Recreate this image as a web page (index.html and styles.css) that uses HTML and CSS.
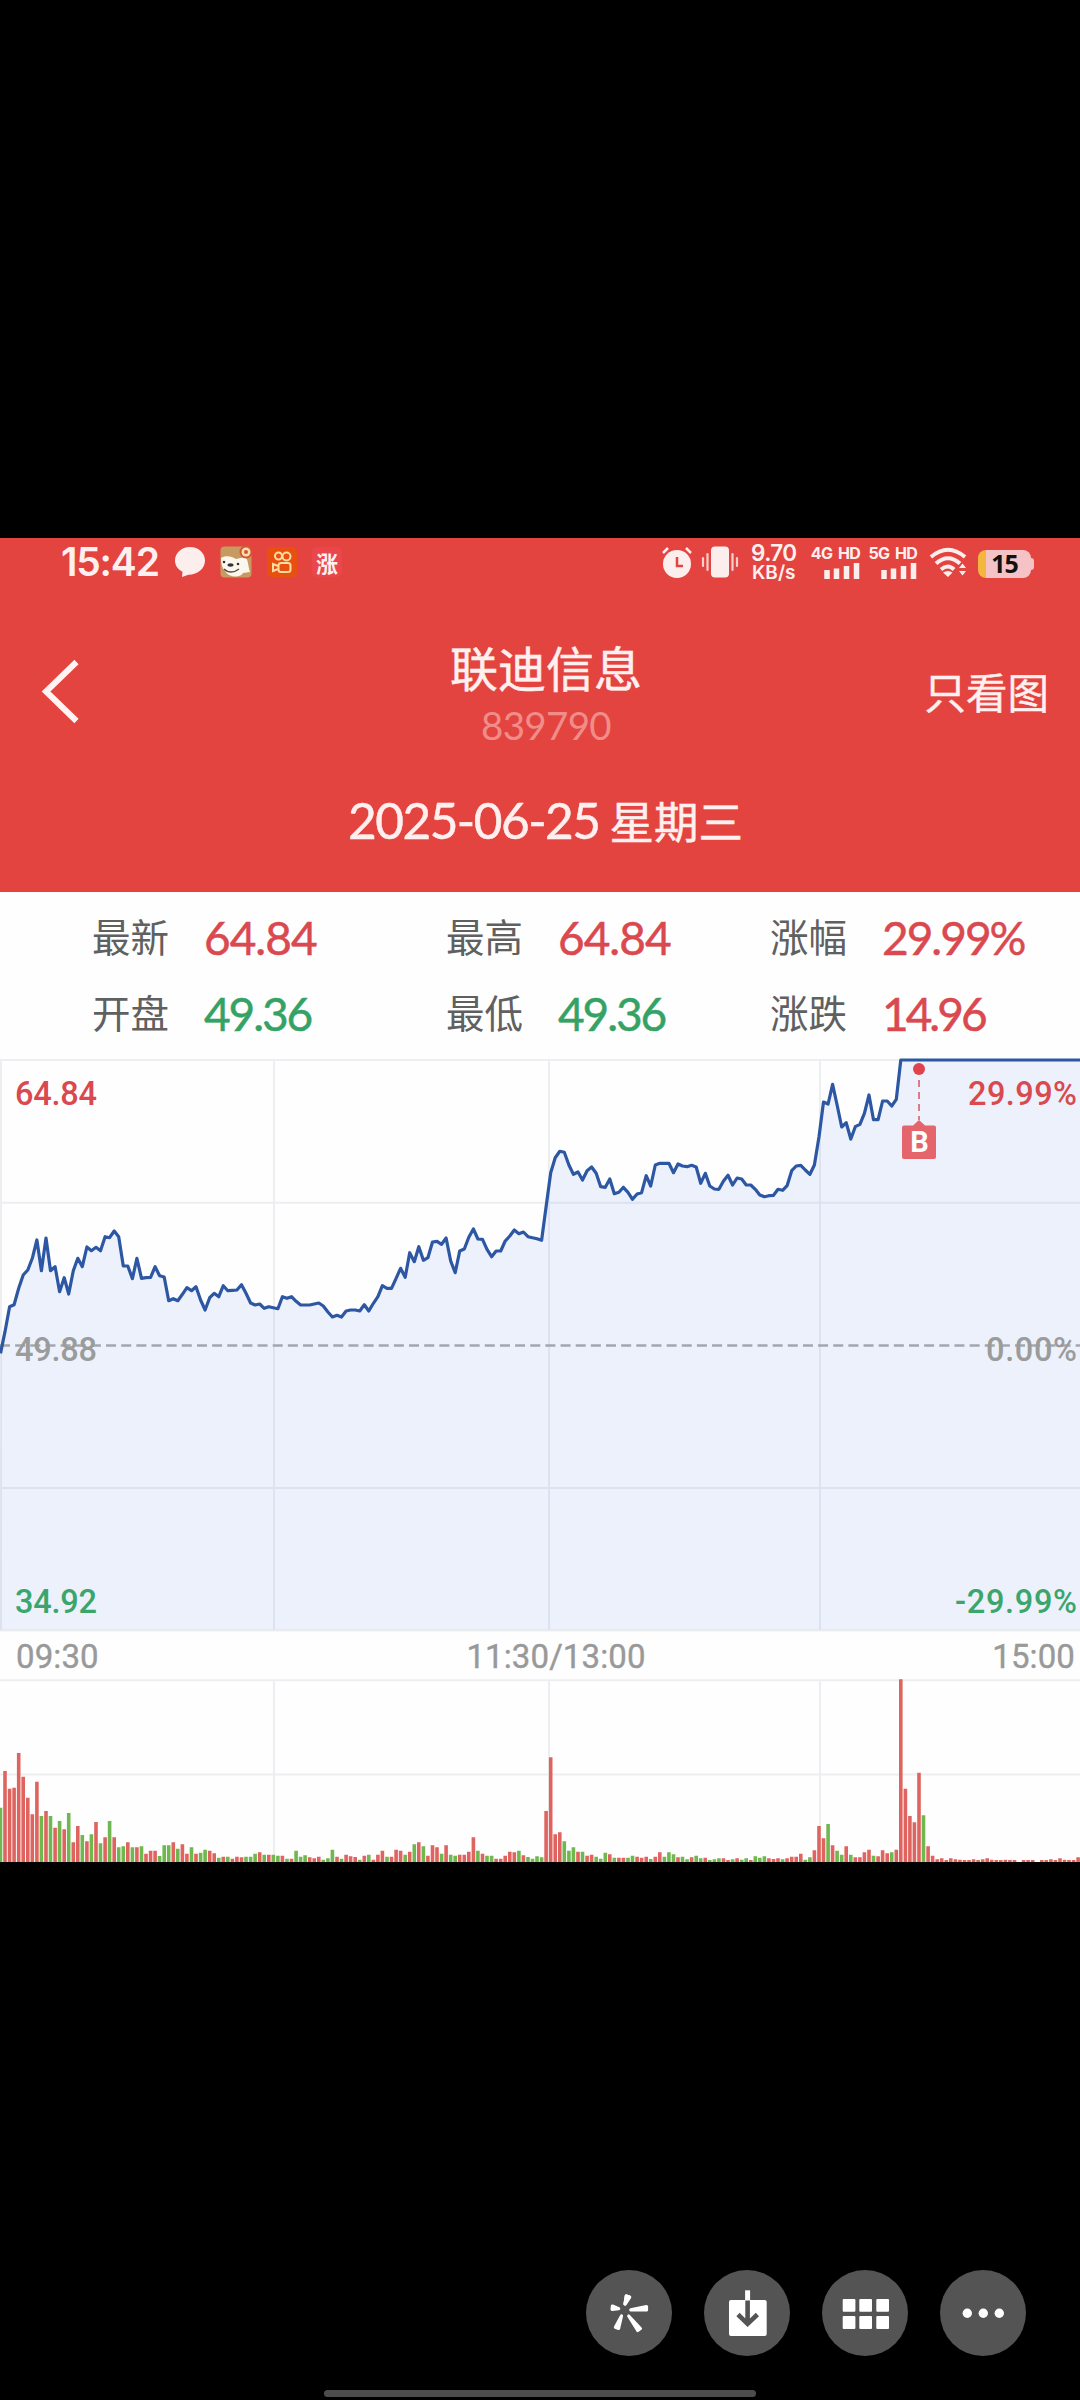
FILE: index.html
```html
<!DOCTYPE html>
<html lang="zh-CN">
<head>
<meta charset="utf-8">
<title>联迪信息 839790</title>
<link rel="stylesheet" href="styles.css">
</head>
<body>
<main class="viewer">
  <section class="shot">
    <header class="head">
      <div class="status">
        <div class="status-left">
          <span class="clock">15:42</span>
          <svg class="ic-chat" width="32" height="32" viewBox="0 0 32 32"><path fill="#fdeeee" d="M16 1C7.500 1 1 7 1 14.500c0 5 3 9 7.500 11.300L8 31l6.500-2.200C24 28.500 31 22.500 31 14.500 31 7 24.500 1 16 1z"/></svg>
          <svg class="ic-dog" width="32" height="32" viewBox="0 0 32 32"><rect x=".5" y=".5" width="31" height="31" rx="4" fill="#c79a62"/><path fill="#fbf7ee" d="M1 12c4-3 11-2 15 1l9-2c3 1 3 9 5 15l-7 1c-2 5-14 5-18-2-3-3-4-8-4-13z"/><path d="M4 23c4 4 10 4 15 0" fill="none" stroke="#584b3c" stroke-width="1.300"/><ellipse cx="10.500" cy="19" rx="3" ry="1.700" fill="#333"/><circle cx="4" cy="16" r="1.300" fill="#333"/><circle cx="18" cy="18" r="1.300" fill="#333"/><circle cx="26" cy="6" r="6.500" fill="#d4562e"/><circle cx="26" cy="6" r="4.500" fill="#f5dfb2"/><circle cx="26" cy="6" r="2" fill="#d4562e"/></svg>
          <svg class="ic-cam" width="30" height="32" viewBox="0 0 30 32"><rect y="1" width="30" height="30" rx="5" fill="#e9500f"/><g fill="none" stroke="#ffdca0" stroke-width="2"><circle cx="11.500" cy="10" r="3.500"/><circle cx="19.500" cy="10.500" r="4"/><rect x="11.500" y="17" width="12" height="9" rx="2.500"/><path d="M11 20l-5-2v7l5-2"/></g></svg>
          <span class="badge-app">涨</span>
        </div>
        <div class="status-right">
          <svg width="32" height="32" viewBox="0 0 32 32"><circle cx="16" cy="18" r="14" fill="#fdeeee"/><path d="M2 7l5-5M30 7l-5-5" stroke="#fdeeee" stroke-width="2.500" fill="none"/><path d="M16 11v9h6" fill="none" stroke="#e34440" stroke-width="2.500"/></svg>
          <svg class="ic-vib" width="38" height="32" viewBox="0 0 38 32"><rect x="10" y=".5" width="18" height="31" rx="4" fill="#fdeeee"/><path d="M2 12v8M6.500 8v16M36 12v8M31.500 8v16" stroke="#f9cfcd" stroke-width="2.200" stroke-linecap="round"/></svg>
          <div class="speed"><span>9.70</span><span class="unit">KB/s</span></div>
          <div class="net"><span>4G HD</span><svg width="36" height="17" viewBox="0 0 36 17"><path d="M3 8v9M12.500 6.500V17M22.500 4v13M32.500 1v16" stroke="#fdeeee" stroke-width="5.500"/></svg></div>
          <div class="net second"><span>5G HD</span><svg width="36" height="17" viewBox="0 0 36 17"><path d="M3 8v9M12.500 6.500V17M22.500 4v13M32.500 1v16" stroke="#fdeeee" stroke-width="5.500"/></svg></div>
          <svg class="ic-wifi" width="38" height="30" viewBox="0 0 38 30"><g fill="none" stroke="#fdeeee" stroke-width="4"><path d="M2 10Q19-4.500 36 10"/><path d="M7 16.500Q19 6 31 16.500"/><path d="M12 22.500q7-6 13 0"/></g><path d="M14 25.500l5 4.500 4.500-4.500q-4.500-3-9.500 0zM30 21l3.500-4.500L37 21zM30 24l3.500 4.500L37 24z" fill="#fdeeee"/></svg>
          <div class="battery"><span>15</span></div>
        </div>
      </div>
      <div class="titlebar">
        <svg class="back" width="40" height="66" viewBox="0 0 40 66"><path d="M36.500 4L6 33.500 36.500 63" fill="none" stroke="#fff4f3" stroke-width="6"/></svg>
        <div class="title"><h1>联迪信息</h1><p>839790</p></div>
        <span class="only">只看图</span>
      </div>
      <div class="date"><span class="day">2025-06-25</span><span class="week">星期三</span></div>
    </header>
    <dl class="stats">
      <div><dt>最新</dt><dd class="up">64.84</dd></div>
      <div><dt>最高</dt><dd class="up">64.84</dd></div>
      <div><dt>涨幅</dt><dd class="up pct">29.99%</dd></div>
      <div><dt>开盘</dt><dd class="down">49.36</dd></div>
      <div><dt>最低</dt><dd class="down">49.36</dd></div>
      <div><dt>涨跌</dt><dd class="up diff">14.96</dd></div>
    </dl>
    <svg class="price" width="1080" height="575" viewBox="0 1057 1080 575">
      <path class="area" id="area"/>
      <path class="grid" d="M0 1060H1080M0 1202.700H1080M0 1488H1080M0 1630.500H1080M1 1060V1630M274 1060V1630M549 1060V1630M820 1060V1630"/>
      <path class="base" d="M0 1345.500H1080"/>
      <path class="line" id="line"/>
      <g class="labels">
        <text class="up" x="15" y="1104.500" textLength="82">64.84</text>
        <text class="up" x="968" y="1104.500" textLength="109">29.99%</text>
        <text x="15" y="1361" textLength="82">49.88</text>
        <text x="986" y="1361" textLength="91">0.00%</text>
        <text class="down" x="15" y="1612.500" textLength="82">34.92</text>
        <text class="down" x="955" y="1612.500" textLength="122">-29.99%</text>
      </g>
      <circle cx="919" cy="1069" r="6" fill="#e1434c"/>
      <path d="M919 1080V1120" stroke="#d5717d" stroke-width="1.800" stroke-dasharray="7 5"/>
      <path d="M904 1125.500h9l6-5.500 6 5.500h9q2 0 2 2v29.500q0 2-2 2h-30q-2 0-2-2V1127.500q0-2 2-2z" fill="#e4656c"/>
      <text class="buy" x="919.500" y="1151.500">B</text>
    </svg>
    <div class="times"><span>09:30</span><span>11:30/13:00</span><span>15:00</span></div>
    <svg class="volume" width="1080" height="184" viewBox="0 1678 1080 184">
      <path class="grid" d="M0 1680.300H1080M0 1774.500H1080M274 1680V1862M549 1680V1862M820 1680V1862"/>
      <path class="vol-up" id="volUp"/>
      <path class="vol-down" id="volDown"/>
    </svg>
  </section>
  <nav class="tools">
    <button aria-label="识图"><svg viewBox="0 0 86 86"><g fill="#fff" stroke="#fff" stroke-width="3.200" stroke-linejoin="round"><path d="M39 34l4.600-6.900-3.300-1.200zM44.800 39.800l15.700.2v-3.500zM42.700 46l11.700 12.500-2.700 2zM35.500 46l-2.900 12.400-3.200-1.200zM32.700 38.700l-6.600.6.300-3.200z"/><path d="M39 34l1.300-8 3.300 1.200z"/></g></svg></button>
    <button aria-label="下载"><svg viewBox="0 0 86 86"><rect x="25" y="30" width="37.700" height="36" rx="2" fill="#fff"/><path d="M43.600 20.300V30" stroke="#fff" stroke-width="5"/><path d="M43.600 30.500V53M34 44.500l9.600 9.300 9.800-9.300" fill="none" stroke="#545454" stroke-width="4.600"/></svg></button>
    <button aria-label="全部图片"><svg viewBox="0 0 86 86"><g fill="#fff"><rect x="20.700" y="29" width="12.700" height="12.700" rx="1"/><rect x="37.300" y="29" width="12.700" height="12.700" rx="1"/><rect x="54.300" y="29" width="12.700" height="12.700" rx="1"/><rect x="20.700" y="46" width="12.700" height="12.900" rx="1"/><rect x="37.300" y="46" width="12.700" height="12.900" rx="1"/><rect x="54.300" y="46" width="12.700" height="12.900" rx="1"/></g></svg></button>
    <button aria-label="更多"><svg viewBox="0 0 86 86"><g fill="#fff"><circle cx="27.300" cy="43.300" r="4.700"/><circle cx="43.300" cy="43.300" r="4.700"/><circle cx="59.300" cy="43.300" r="4.700"/></g></svg></button>
  </nav>
  <div class="home"></div>
</main>
<script src="chart.js"></script>
</body>
</html>
```
FILE: styles.css
```css
* { box-sizing: border-box; margin: 0; padding: 0; }
body { background: #000; font-family: Lato, "Noto Sans CJK SC", sans-serif; }
svg { display: block; flex: none; }
.viewer { width: 1080px; height: 2400px; padding-top: 538px; display: flex; flex-direction: column; overflow: hidden; }
.shot { height: 1324px; flex: none; background: #fefefe; }

.head { height: 353.500px; background: #e34440; color: #fff0ef; }
.status { height: 48px; display: flex; justify-content: space-between; padding: 0 47px 0 61px; }
.status-left, .status-right { display: flex; align-items: center; height: 48px; }
.clock { width: 100px; font: 600 39px/48px Inter, sans-serif; letter-spacing: -1.200px; white-space: nowrap; }
.ic-chat { margin-left: 13px; }
.ic-dog { margin-left: 14px; }
.ic-cam { margin-left: 15px; }
.badge-app { margin-left: 15px; width: 30px; height: 30px; border-radius: 5px; background: #e9474d; font: 700 22px/30px "Noto Sans CJK SC", sans-serif; text-align: center; }
.ic-vib { margin-left: 8px; }
.speed { margin-left: 12px; width: 47px; display: flex; flex-direction: column; font: 600 22.500px/21px Inter, sans-serif; letter-spacing: -.6px; white-space: nowrap; padding-top: 1px; }
.speed .unit { font-size: 19px; line-height: 20px; letter-spacing: 0; padding-left: 1px; }
.net { margin-left: 13px; width: 49px; display: flex; flex-direction: column; align-items: flex-end; font: 700 16px/16px Inter, sans-serif; letter-spacing: -.8px; word-spacing: 3px; white-space: nowrap; }
.net.second { margin-left: 8px; }
.net svg { margin-top: 1px; }
.ic-wifi { margin-left: 12px; }
.battery { position: relative; margin: 3px 2px 0 11px; width: 53px; height: 28px; border-radius: 8px; background: linear-gradient(90deg, #f4b63c 8px, #f5c3c6 8px); color: #111; font: 700 25px/27px "Noto Sans", sans-serif; letter-spacing: -1px; text-align: center; }
.battery::after { content: ""; position: absolute; right: -3px; top: 8px; width: 3px; height: 12px; border-radius: 0 3px 3px 0; background: #f5c3c6; }

.titlebar { height: 166px; display: grid; grid-template-columns: 270px 1fr 270px; align-items: start; padding-top: 45px; }
.back { margin: 27px 0 0 40px; }
.title { text-align: center; padding-left: 12px; }
.title h1 { font: 400 48px/70px "Noto Sans CJK SC", sans-serif; -webkit-text-stroke: .5px; }
.title p { padding-top: 4px; font-size: 38.500px; line-height: 40px; letter-spacing: -.7px; color: #f08d89; }
.only { justify-self: end; margin: 30px 31px 0 0; font: 400 41.500px/60px "Noto Sans CJK SC", sans-serif; -webkit-text-stroke: .4px; }
.date { display: flex; justify-content: center; align-items: baseline; gap: 10px; padding-top: 34px; padding-left: 11px; line-height: 68px; -webkit-text-stroke: .5px; }
.day { font-size: 49.500px; letter-spacing: -1.500px; }
.week { font-size: 44.500px; font-family: "Noto Sans CJK SC", sans-serif; }

.stats { height: 165.500px; display: grid; grid-template-columns: 354px 324px 1fr; grid-template-rows: 76px 76px; padding: 6px 0 0 92px; }
.stats div { display: flex; align-items: center; }
.stats dt { width: 112px; color: #606060; font: 400 38.500px/76px "Noto Sans CJK SC", sans-serif; padding-bottom: 2px; }
.stats dd { font-size: 46px; line-height: 76px; letter-spacing: -1px; padding-top: 4px; -webkit-text-stroke: .5px; }
.stats .pct { letter-spacing: -2px; }
.stats .down { letter-spacing: -2.100px; }
.stats .diff { letter-spacing: -3px; }
dd.up { color: #d9494f; }
dd.down { color: #35a265; }

.grid { fill: none; stroke: #14204a; stroke-opacity: .07; stroke-width: 2; }
.area { fill: #ecf1fc; }
.line { fill: none; stroke: #2d57a3; stroke-width: 3.200; stroke-linejoin: round; }
.base { stroke: #a3a6ae; stroke-width: 2.400; stroke-dasharray: 10 5.150; }
.labels { font: 500 32.500px Roboto, sans-serif; fill: #9b9b9b; }
.labels .up { fill: #d9494f; }
.labels .down { fill: #3ba56c; }
.buy { font: 700 29px Roboto, sans-serif; fill: #fff; text-anchor: middle; }
.times { height: 46px; display: grid; grid-template-columns: 1fr auto 1fr; padding: 0 5px 0 16px; font: 400 33px/49px Roboto, sans-serif; letter-spacing: .1px; color: #999; -webkit-text-stroke: .4px; }
.times span:nth-child(2) { padding-left: 21px; }
.times span:last-child { text-align: right; }
.vol-up, .vol-down { fill: none; stroke-width: 3.600; }
.vol-up { stroke: #df6460; }
.vol-down { stroke: #6fb74e; }

.tools { display: flex; gap: 32px; margin: 408px 0 0 586px; }
.tools button { width: 86px; height: 86px; border: 0; border-radius: 50%; background: #545454; }
.home { width: 432px; height: 7px; margin: 34px 0 0 324px; border-radius: 4px; background: #4c4c4c; }
```
FILE: chart.js
```js
// One sample per trading minute; values are thirds of a pixel.
const STEP = 4.547;
const price = [
  520,455,380,374,325,285,270,235,180,272,174,272,260,335,293,342,272,235,260,201,
  212,202,212,170,173,153,170,258,258,296,235,295,293,292,260,287,291,362,356,362,
  343,323,332,320,360,390,353,340,350,317,332,331,330,314,340,369,375,372,385,380,
  383,386,350,355,350,364,375,375,375,372,369,378,396,411,406,411,393,390,390,393,
  374,393,370,350,317,325,325,295,265,292,218,245,200,241,233,186,184,193,174,243,
  278,213,207,172,147,177,178,208,230,213,213,183,168,150,161,156,170,173,176,181,
  80,-22,-67,-86,-83,-45,-17,-24,0,-28,-39,-20,20,22,-3,41,37,22,37,58,
  42,38,-13,18,-45,-50,-50,-50,-22,-48,-42,-40,-44,-39,10,-20,18,27,28,3,
  -14,15,-6,-3,15,15,28,45,50,47,46,28,31,17,-28,-42,-44,-30,-17,-45,
  -130,-234,-228,-287,-225,-159,-172,-123,-160,-167,-200,-255,-181,-181,-237,-237,-222,-242,-360,-360
];
const pts = price.map((v, i) => (0.5 + i * STEP).toFixed(1) + ' ' + (1180 + v / 3).toFixed(1));
pts.push('1082 1060');
document.getElementById('line').setAttribute('d', 'M' + pts.join('L'));
document.getElementById('area').setAttribute('d', 'M0 1630L' + pts.join('L') + 'V1630Z');

// Positive: price rose in that minute, negative: price fell.
const volume = [
  -163,273,220,223,327,256,193,143,241,-138,153,-138,103,-123,98,-147,59,108,-81,62,
  -83,120,-56,74,-123,74,-44,-47,59,-44,44,-47,25,34,34,-18,-50,-50,59,-40,
  53,25,-44,25,-28,-37,34,26,-13,16,-16,10,16,14,-16,-16,-25,29,-22,22,
  -22,-19,19,-10,10,-34,-16,-20,14,11,16,-7,-11,-37,16,-10,22,17,15,-7,
  19,-22,7,22,34,-16,16,37,34,-22,31,-53,59,-47,19,50,44,-25,50,-22,
  -19,22,22,31,74,-34,25,-19,-19,10,10,19,31,29,-34,20,-15,-10,-17,-14,
  153,314,83,89,-62,-34,-44,31,-31,19,22,-16,-10,-28,23,-13,13,13,-13,-19,
  16,13,16,-9,16,29,-16,-29,-23,14,-16,-8,14,-19,-11,13,-6,-8,-11,11,
  6,-8,11,-7,-11,6,-17,-13,-17,11,9,11,-8,11,16,16,25,-7,-14,35,
  108,71,-114,50,-34,-22,47,-22,14,14,29,37,-19,17,35,26,-29,37,548,220,
  138,119,268,-140,47,19,8,11,6,11,8,7,6,6,8,6,8,11,7,6,
  6,7,6,6,0,6,6,6,0,6,6,8,6,11,7,6,6,14
];
const bars = (keep) => volume
  .map((v, i) => keep(v) ? 'M' + (0.5 + i * STEP).toFixed(1) + ' 1862v' + (-Math.abs(v) / 3).toFixed(1) : '')
  .join('');
document.getElementById('volUp').setAttribute('d', bars((v) => v > 0));
document.getElementById('volDown').setAttribute('d', bars((v) => v < 0));
```
